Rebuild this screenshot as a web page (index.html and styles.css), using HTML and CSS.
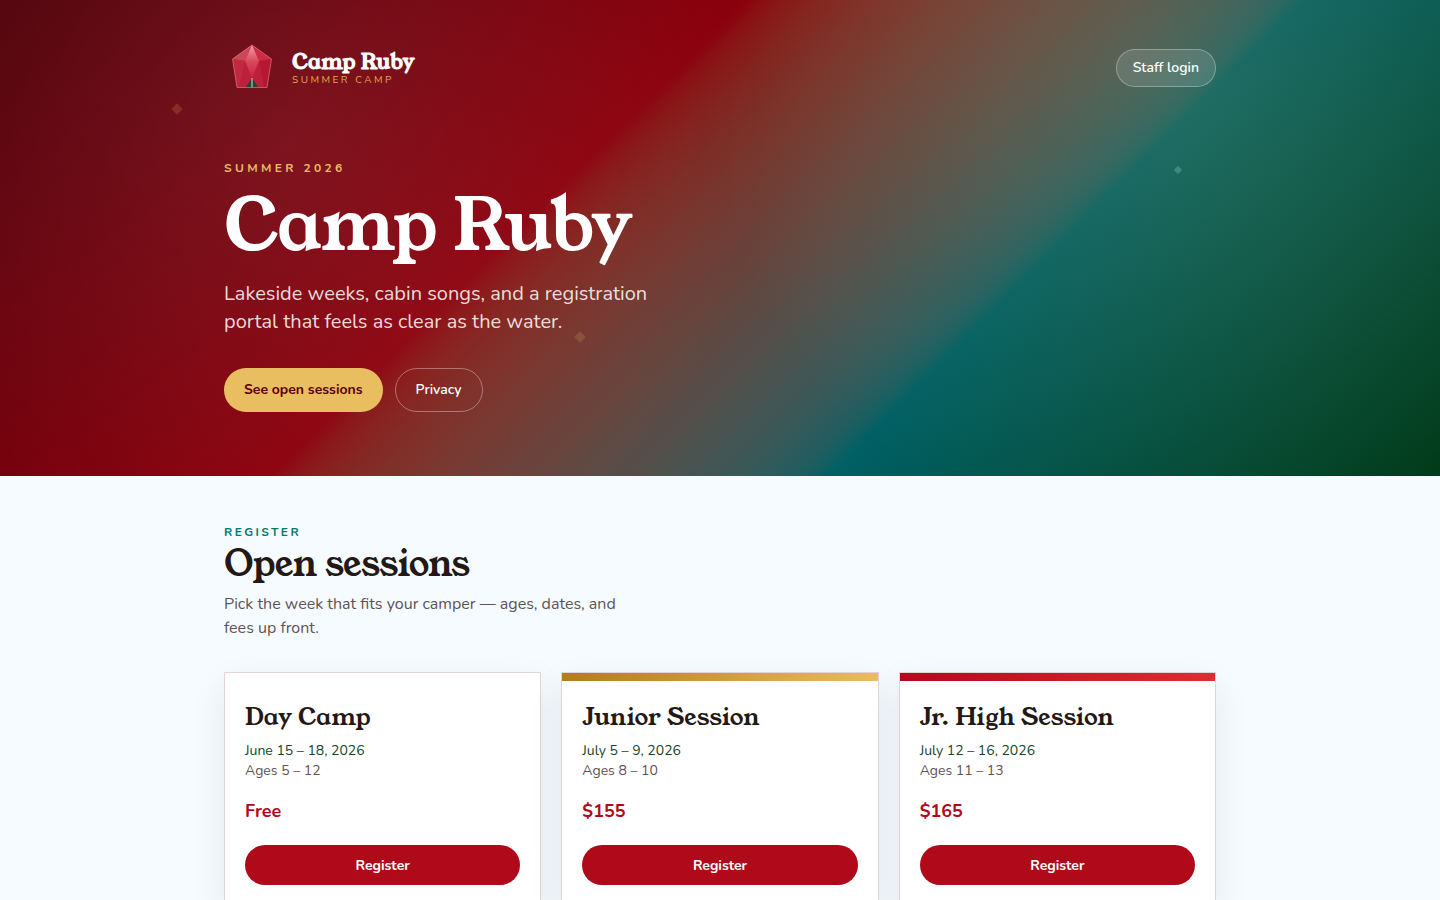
FILE: index.html
```html
<!DOCTYPE html>
<html lang="en">
<head>
    <meta charset="UTF-8">
    <meta name="viewport" content="width=device-width, initial-scale=1.0">
    <title>Camp Ruby</title>
    <link rel="stylesheet" href="styles.css">
</head>
<body>
    <header class="hero">
        <span class="sparkle sparkle-left"></span>
        <span class="sparkle sparkle-middle"></span>
        <span class="sparkle sparkle-right"></span>
        <div class="container">
            <nav class="topbar">
                <a class="brand" href="#">
                    <svg class="brand-mark" viewBox="0 0 56 56" aria-hidden="true">
                        <defs>
                            <linearGradient id="facet" x1="0" y1="0" x2="0" y2="1">
                                <stop offset="0" stop-color="#f0a0a8"/>
                                <stop offset=".5" stop-color="#d8485c"/>
                                <stop offset="1" stop-color="#c4243f"/>
                            </linearGradient>
                        </defs>
                        <path d="M28 5L47.500 19L43 47.500H13L8.500 19Z" fill="#be1f3a"/>
                        <path d="M28 5L8.500 19L21 21Z" fill="#cc4655"/>
                        <path d="M28 5L47.500 19L35 21Z" fill="#cc2c45"/>
                        <path d="M8.500 19L21 21L15 47H13Z" fill="#c0293f"/>
                        <path d="M35 21L47.500 19L43 47H40Z" fill="#b41832"/>
                        <path d="M28 5L21 21L28 38L35 21Z" fill="url(#facet)"/>
                        <path d="M28 38L34.500 47.500H21.500Z" fill="#1d4a38"/>
                        <path d="M27.500 38h1v9.500h-1z" fill="#f0d3b0"/>
                        <path d="M28 5L47.500 19L43 47.500H13L8.500 19Z" fill="none" stroke="#e5828f" stroke-opacity=".6"/>
                    </svg>
                    <span class="brand-text">
                        <span class="brand-name">Camp Ruby</span>
                        <span class="brand-tag">SUMMER CAMP</span>
                    </span>
                </a>
                <a class="staff-login" href="#">Staff login</a>
            </nav>
            <div class="hero-copy">
                <p class="eyebrow">SUMMER 2026</p>
                <h1>Camp Ruby</h1>
                <p class="lead">Lakeside weeks, cabin songs, and a registration portal that feels as clear as the water.</p>
                <div class="actions">
                    <a class="btn btn-gold" href="#sessions">See open sessions</a>
                    <a class="btn btn-outline" href="#">Privacy</a>
                </div>
            </div>
        </div>
    </header>
    <main class="container sessions" id="sessions">
        <p class="eyebrow eyebrow-teal">REGISTER</p>
        <h2>Open sessions</h2>
        <p class="intro">Pick the week that fits your camper — ages, dates, and fees up front.</p>
        <div class="cards">
            <article class="card">
                <h3>Day Camp</h3>
                <p class="dates">June 15 – 18, 2026</p>
                <p class="ages">Ages 5 – 12</p>
                <p class="price">Free</p>
                <button type="button">Register</button>
            </article>
            <article class="card card-gold">
                <h3>Junior Session</h3>
                <p class="dates">July 5 – 9, 2026</p>
                <p class="ages">Ages 8 – 10</p>
                <p class="price">$155</p>
                <button type="button">Register</button>
            </article>
            <article class="card card-ruby">
                <h3>Jr. High Session</h3>
                <p class="dates">July 12 – 16, 2026</p>
                <p class="ages">Ages 11 – 13</p>
                <p class="price">$165</p>
                <button type="button">Register</button>
            </article>
        </div>
    </main>
</body>
</html>
```
FILE: styles.css
```css
* {
    box-sizing: border-box;
}
body {
    font-family: Nunito, Lato, sans-serif;
    margin: 0;
    background-color: #f6fbff;
    color: #231815;
}
h1, h2, h3, p {
    margin: 0;
}
h1, h2, h3, .brand-name {
    font-family: "Young Serif", "Liberation Serif", serif;
    font-weight: normal;
}
h1, h2 {
    letter-spacing: -0.02em;
}
a {
    text-decoration: none;
}
.container {
    max-width: 1040px;
    margin: 0 auto;
    padding: 0 24px;
}

/* Hero */
.hero {
    position: relative;
    overflow: hidden;
    padding: 40px 0 64px;
    color: #fff;
    background:
        radial-gradient(circle at 20% 30%, rgba(255, 255, 255, 0.08), transparent 40%),
        radial-gradient(circle at 82% 20%, rgba(232, 190, 96, 0.14), transparent 38%),
        linear-gradient(135deg in oklab, #500009 0%, #8b000c 39%, #006064 68%, #003a18 100%);
}
.sparkle {
    position: absolute;
    width: 8px;
    height: 8px;
    transform: rotate(45deg);
    background-color: #e8be60;
    opacity: 0.18;
}
.sparkle-left {
    left: 12%;
    top: 22%;
}
.sparkle-middle {
    left: 40%;
    top: 70%;
}
.sparkle-right {
    right: 18%;
    top: 35%;
    width: 6px;
    height: 6px;
    border-radius: 1px;
    background-color: #b5e5dc;
    opacity: 0.25;
}
.topbar {
    display: flex;
    align-items: center;
    justify-content: space-between;
}
.brand {
    display: flex;
    align-items: center;
    gap: 12px;
    color: #fff;
}
.brand-mark {
    width: 56px;
    height: 56px;
}
.brand-text {
    display: flex;
    flex-direction: column;
}
.brand-name {
    font-size: 21px;
    font-weight: bold;
    line-height: 24px;
}
.brand-tag {
    font-size: 10px;
    line-height: 12px;
    letter-spacing: 0.25em;
    color: #e8a850;
}
.staff-login {
    padding: 8px 16px;
    border: 1px solid rgba(255, 255, 255, 0.3);
    border-radius: 20px;
    background-color: rgba(255, 255, 255, 0.12);
    color: #fff;
    font-size: 14px;
    font-weight: 600;
    line-height: 20px;
}
.hero-copy {
    padding-top: 64px;
}
.eyebrow {
    font-size: 12px;
    font-weight: bold;
    line-height: 16px;
    letter-spacing: 0.28em;
    color: #e8be60;
}
h1 {
    margin-top: 12px;
    font-size: 72px;
    line-height: 76px;
}
.lead {
    max-width: 448px;
    margin-top: 16px;
    font-size: 20px;
    line-height: 28px;
    color: rgba(255, 255, 255, 0.85);
}
.actions {
    display: flex;
    gap: 12px;
    margin-top: 32px;
}
.btn {
    display: flex;
    align-items: center;
    min-height: 44px;
    padding: 0 20px;
    border-radius: 22px;
    font-size: 14px;
    font-weight: bold;
    line-height: 20px;
}
.btn-gold {
    background-color: #e8be60;
    color: #5a0008;
}
.btn-outline {
    border: 1px solid rgba(255, 255, 255, 0.35);
    color: #fff;
    font-weight: 600;
}

/* Sessions */
.sessions {
    padding-top: 48px;
    padding-bottom: 64px;
}
.eyebrow-teal {
    letter-spacing: 0.2em;
    color: #00796b;
}
h2 {
    margin-top: 4px;
    font-size: 36px;
    line-height: 40px;
}
.intro {
    max-width: 400px;
    margin-top: 8px;
    font-size: 16px;
    line-height: 24px;
    color: #5f5355;
}
.cards {
    display: grid;
    grid-template-columns: repeat(3, 1fr);
    gap: 20px;
    margin-top: 32px;
}
.card {
    position: relative;
    padding: 28px 20px 20px;
    border: 1px solid #e2d3d8;
    background-color: #fff;
    box-shadow: 0 12px 32px rgba(40, 20, 50, 0.08);
}
.card-gold::before,
.card-ruby::before {
    content: "";
    position: absolute;
    top: 0;
    left: 0;
    right: 0;
    height: 8px;
}
.card-gold::before {
    background: linear-gradient(135deg, #b37a1f, #e8be60);
}
.card-ruby::before {
    background: linear-gradient(135deg, #b00a1c, #d93033);
}
h3 {
    font-size: 24px;
    line-height: 32px;
}
.dates,
.ages {
    font-size: 14px;
    line-height: 20px;
}
.dates {
    margin-top: 8px;
    color: #14452a;
}
.ages {
    color: #5f5355;
}
.price {
    margin: 16px 0 20px;
    font-size: 18px;
    font-weight: bold;
    line-height: 28px;
    color: #b00a1c;
}
.card button {
    width: 100%;
    height: 40px;
    border: none;
    border-radius: 20px;
    background-color: #b00a1a;
    color: #fff;
    font-family: inherit;
    font-size: 14px;
    font-weight: bold;
    cursor: pointer;
}
@media (max-width: 800px) {
    .cards {
        grid-template-columns: 1fr;
    }
    h1 {
        font-size: 56px;
    }
}
```
